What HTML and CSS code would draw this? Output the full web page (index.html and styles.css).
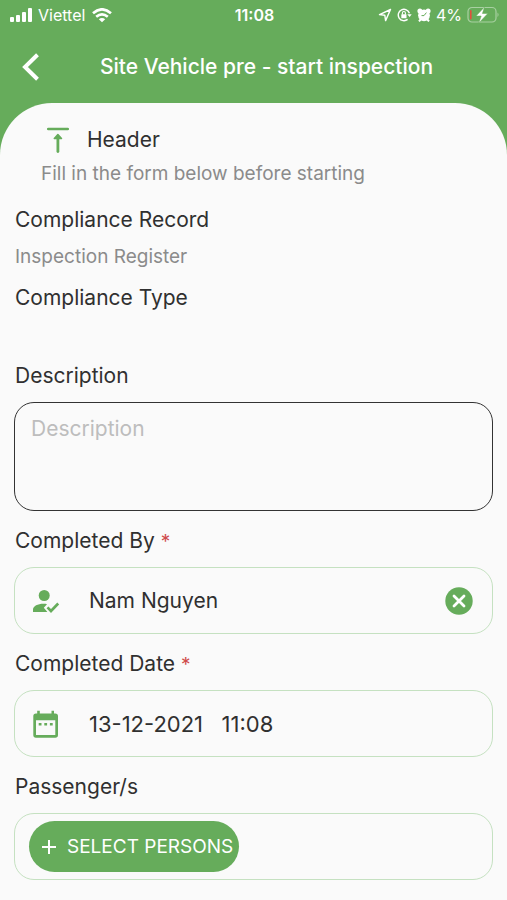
FILE: index.html
```html
<!DOCTYPE html>
<html lang="en">
<head>
<meta charset="utf-8">
<meta name="viewport" content="width=device-width, initial-scale=1">
<title>Site Vehicle pre - start inspection</title>
<link rel="stylesheet" href="styles.css">
</head>
<body>
<div class="status">
  <div class="status-side">
    <svg width="23" height="15" viewBox="0 0 23 15" fill="#fff" aria-hidden="true"><rect x="0" y="9" width="4" height="5" rx="1"/><rect x="6" y="7" width="4" height="7" rx="1"/><rect x="12" y="4" width="4" height="10" rx="1"/><rect x="18" y="0" width="4" height="14" rx="1"/></svg>
    <span class="carrier">Viettel</span>
    <svg class="wifi" width="20" height="15" viewBox="0 0 20 15" fill="none" stroke="#fff" stroke-width="2.6" aria-hidden="true"><path d="M1 5.3Q10-2.7 19 5.3M4.2 8.8Q10 3.8 15.8 8.8"/><path d="M10 14.3 6.8 11.3Q10 8.8 13.2 11.3Z" fill="#fff" stroke="none"/></svg>
  </div>
  <span class="time">11:08</span>
  <div class="status-side status-right">
    <svg width="14" height="14" viewBox="0 0 14 14" fill="none" stroke="#fff" stroke-width="1.4" stroke-linejoin="round" aria-hidden="true"><path d="M12.5 1.5 1.5 6.6 6.8 7.2 7.6 12.6Z"/></svg>
    <svg width="15" height="14" viewBox="0 0 15 14" fill="none" stroke="#fff" stroke-width="1.4" aria-hidden="true"><path d="M10.6 11.4A5.7 5.7 0 1 1 12.400 5.300"/><path d="M10.300 6.200h4.400L12.600 9Z" fill="#fff" stroke="none"/><rect x="4.300" y="6.200" width="5.200" height="4" rx=".5" fill="#fff" stroke="none"/><path d="M5.400 6.500V5a1.500 1.500 0 0 1 3 0v1.500" stroke-width="1.100"/></svg>
    <svg width="14" height="14" viewBox="0 0 14 14" fill="#fff" aria-hidden="true"><circle cx="7" cy="7.300" r="5.900"/><circle cx="2.900" cy="2.900" r="2.500"/><circle cx="11.100" cy="2.900" r="2.500"/><path d="m2 13.400 2-2.400M12 13.400 10 11" stroke="#fff" stroke-width="2"/><path d="M9.400 4.600 7 7.600H4.500" fill="none" stroke="#66ac5b" stroke-width="1"/></svg>
    <span class="percent">4%</span>
    <svg width="32" height="18" viewBox="0 0 32 18" aria-hidden="true"><rect x="1" y="1.500" width="28" height="14.500" rx="4" fill="none" stroke="#a8d0a2" stroke-width="1.200"/><path d="M30.500 6.500q2 2.200 0 4.500Z" fill="#a8d0a2"/><rect x="3" y="4" width="1.600" height="9.500" rx=".8" fill="#e2503c"/><path d="M17.500 1 9 10h5.200L11.800 17 20.800 7.500h-5.400Z" fill="#fff" stroke="#66ac5b" stroke-width=".5"/></svg>
  </div>
</div>

<header class="bar">
  <button class="back" type="button" aria-label="Back">
    <svg width="18" height="28" viewBox="0 0 18 28" fill="none" stroke="#fff" stroke-width="4" aria-hidden="true"><path d="M15.500 1.800 3 14 15.500 26.200"/></svg>
  </button>
  <h1>Site Vehicle pre - start inspection</h1>
</header>

<main class="panel">
  <section class="intro">
    <div class="intro-head">
      <svg width="22" height="26" viewBox="0 0 22 26" fill="none" stroke="#66ac5b" aria-hidden="true"><path d="M1.200 2h19.600" stroke-width="2.600" stroke-linecap="round"/><path d="M10.900 24.500V10" stroke-width="2.800" stroke-linecap="round"/><path d="M10.900 7.500 14.500 11.500H7.300Z" fill="#66ac5b" stroke-width="1.500" stroke-linejoin="round"/></svg>
      <h2>Header</h2>
    </div>
    <p class="hint">Fill in the form below before starting</p>
  </section>

  <form class="form">
    <div class="record">
      <span class="label">Compliance Record</span>
      <p class="value">Inspection Register</p>
    </div>
    <div class="record">
      <span class="label">Compliance Type</span>
      <p class="value"></p>
    </div>
    <div class="field">
      <label class="label" for="description">Description</label>
      <textarea id="description" placeholder="Description"></textarea>
    </div>
    <div class="field">
      <label class="label" for="by">Completed By <span class="required">*</span></label>
      <div class="box">
        <svg class="icon" width="28" height="26" viewBox="0 0 28 26" fill="#66ac5b" aria-hidden="true"><circle cx="11.200" cy="7.500" r="5.500"/><path d="M0 24V21.500C0 17.500 6 15.200 12.500 15.800L14 16.200 10.800 19.700 14.400 24Z"/><path d="m14.500 19.300 3.500 3.700 7.200-7.500" fill="none" stroke="#66ac5b" stroke-width="2.600"/></svg>
        <input id="by" type="text" value="Nam Nguyen">
        <button class="clear" type="button" aria-label="Clear">
          <svg width="28" height="28" viewBox="0 0 28 28" aria-hidden="true"><circle cx="14" cy="14" r="13.700" fill="#66ac5b"/><path d="m9 9 10 10M19 9 9 19" stroke="#fff" stroke-width="2.800" stroke-linecap="round"/></svg>
        </button>
      </div>
    </div>
    <div class="field">
      <label class="label" for="date">Completed Date <span class="required">*</span></label>
      <div class="box">
        <svg class="icon" width="28" height="28" viewBox="0 0 28 28" aria-hidden="true"><path d="M3 3.500H4.200V.8H6.800V3.500H18.500V.8H21V3.500H22.300A2.700 2.700 0 0 1 25 6.200V25A2.700 2.700 0 0 1 22.300 27.700H3A2.700 2.700 0 0 1 .3 25V6.200A2.700 2.700 0 0 1 3 3.500ZM3 10.300V25H22.300V10.300Z" fill="#66ac5b" fill-rule="evenodd"/><path d="M5.700 13h2.800v2.600H5.700ZM11.300 13h2.800v2.600h-2.800ZM16.900 13h2.800v2.600h-2.800Z" fill="#66ac5b"/></svg>
        <input id="date" class="date" type="text" value="13-12-2021   11:08">
      </div>
    </div>
    <div class="field">
      <span class="label">Passenger/s</span>
      <div class="box">
        <button class="select" type="button">
          <svg width="16" height="16" viewBox="0 0 16 16" stroke="#fff" stroke-width="2" aria-hidden="true"><path d="M8 1v14M1 8h14"/></svg>
          SELECT PERSONS
        </button>
      </div>
    </div>
  </form>
</main>
</body>
</html>
```
FILE: styles.css
```css
* {
  box-sizing: border-box;
}

body {
  margin: 0;
  min-height: 100vh;
  display: flex;
  flex-direction: column;
  background: #66ac5b;
  color: #303030;
  font-family: Inter, "Liberation Sans", sans-serif;
  font-size: 21px;
  line-height: 28px;
}

h1,
h2,
p {
  margin: 0;
  font-weight: 400;
}

button {
  display: flex;
  align-items: center;
  padding: 0;
  border: 0;
  background: none;
  color: #fff;
  font: inherit;
}

input,
textarea {
  min-width: 0;
  border: 0;
  background: none;
  color: inherit;
  font: inherit;
}

.status {
  display: grid;
  grid-template-columns: 1fr auto 1fr;
  align-items: center;
  height: 30px;
  padding: 0 8px 0 10px;
  color: #fff;
  font-size: 16px;
}

.status-side {
  display: flex;
  align-items: center;
  gap: 5px;
}

.wifi {
  margin-left: 2px;
}

.status-right {
  justify-content: flex-end;
}

.time {
  font-weight: 600;
}

.bar {
  display: grid;
  grid-template-columns: 64px 1fr 38px;
  align-items: center;
  height: 73px;
  color: #fff;
}

.back {
  padding-left: 22px;
}

.bar h1 {
  font-size: 21px;
  font-weight: 500;
  text-align: center;
}

.panel {
  flex: 1;
  padding: 23px 14px 20px;
  border-radius: 52px 52px 0 0;
  background: #fafafa;
}

.intro {
  padding-left: 27px;
  margin-bottom: 21px;
}

.intro-head {
  display: flex;
  align-items: center;
  gap: 18px;
  padding-left: 6px;
}

.intro-head h2 {
  font-size: 21px;
}

.hint,
.value {
  color: #8b8b8b;
  font-size: 19px;
  line-height: 22px;
}

.hint {
  margin-top: 9px;
}

.form {
  display: flex;
  flex-direction: column;
  gap: 16px;
}

.record,
.field {
  display: grid;
  gap: 12px;
}

.value {
  min-height: 22px;
}

.label,
.value {
  padding-left: 1px;
}

.required {
  color: #cf4b4b;
  font-size: 19px;
  line-height: 1;
}

textarea {
  display: block;
  width: 100%;
  height: 109px;
  padding: 12px 16px;
  border: 1px solid #333;
  border-radius: 20px;
  resize: none;
}

textarea::placeholder {
  color: #bdbdbd;
}

.box {
  display: flex;
  align-items: center;
  height: 67px;
  padding: 0 19px 0 14px;
  border: 1px solid #c5e1c1;
  border-radius: 20px;
}

.icon {
  flex: none;
  margin: 0 28px 0 4px;
}

.box input {
  flex: 1;
  padding: 0;
}

.box .date {
  font-size: 22px;
}

.select {
  gap: 10px;
  height: 51px;
  padding: 0 6px 0 12px;
  border-radius: 26px;
  background: #66ac5b;
  font-size: 19px;
}
```
